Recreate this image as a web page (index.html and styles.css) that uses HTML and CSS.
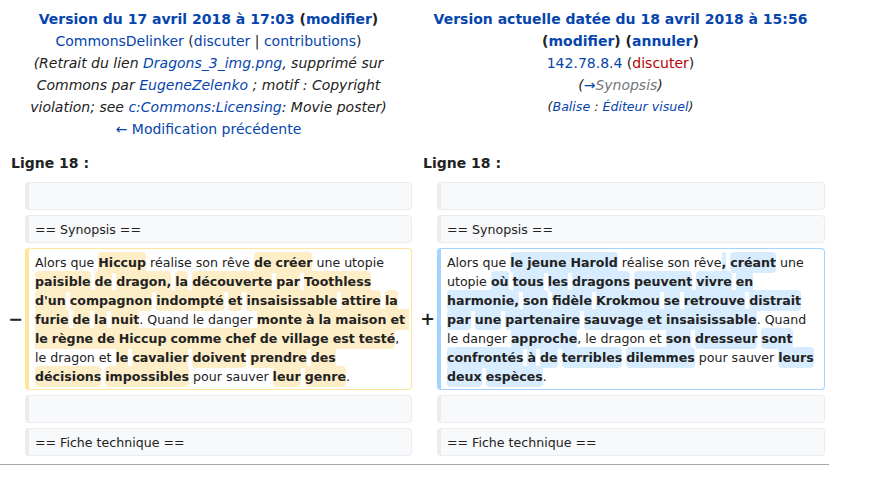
FILE: index.html
```html
<!DOCTYPE html>
<html lang="fr">
<head>
<meta charset="utf-8">
<title>Différences entre les versions</title>
<link rel="stylesheet" href="styles.css">
</head>
<body>
<div class="page">
  <div class="diff">
    <div class="title">
      <div class="t-head"><a href="#">Version du 17 avril 2018 à 17:03</a> (<a href="#">modifier</a>)</div>
      <div><a href="#">CommonsDelinker</a> (<a href="#">discuter</a> | <a href="#">contributions</a>)</div>
      <div class="comment">(Retrait du lien <a href="#">Dragons_3_img.png</a>, supprimé sur Commons par <a href="#">EugeneZelenko</a> ; motif : Copyright violation; see <a href="#">c:Commons:Licensing</a>: Movie poster)</div>
      <div><a href="#">← Modification précédente</a></div>
    </div>
    <div class="title">
      <div class="t-head"><a href="#">Version actuelle datée du 18 avril 2018 à 15:56</a> (<a href="#">modifier</a>) (<a href="#">annuler</a>)</div>
      <div><a href="#">142.78.8.4</a> (<a href="#" class="new">discuter</a>)</div>
      <div class="comment">(<a href="#">→</a><span class="autocomment">Synopsis</span>)</div>
      <div class="comment tags">(<a href="#">Balise</a> : <a href="#">Éditeur visuel</a>)</div>
    </div>

    <div class="lineno">Ligne 18 :</div>
    <div class="lineno lineno-r">Ligne 18 :</div>

    <div class="line context c-left">&nbsp;</div>
    <div class="line context c-right">&nbsp;</div>

    <div class="line context c-left">== Synopsis ==</div>
    <div class="line context c-right">== Synopsis ==</div>

    <div class="marker">−</div>
    <div class="line deleted">Alors que <span class="chg">Hiccup</span> réalise son rêve <span class="chg">de créer</span> une utopie <span class="chg">paisible</span> <span class="chg">de</span> <span class="chg">dragon,</span> <span class="chg">la</span> <span class="chg">découverte</span> <span class="chg">par</span> <span class="chg">Toothless</span> <span class="chg">d'un</span> <span class="chg">compagnon</span> <span class="chg">indompté</span> <span class="chg">et</span> <span class="chg">insaisissable</span> <span class="chg">attire</span> <span class="chg">la</span> <span class="chg">furie</span> <span class="chg">de</span> <span class="chg">la</span> <span class="chg">nuit</span>. Quand le danger <span class="chg">monte à la maison et le règne de Hiccup comme chef de village est testé</span>, le dragon et <span class="chg">le</span> <span class="chg">cavalier</span> <span class="chg">doivent</span> <span class="chg">prendre</span> <span class="chg">des</span> <span class="chg">décisions</span> <span class="chg">impossibles</span> pour sauver <span class="chg">leur</span> <span class="chg">genre</span>.</div>
    <div class="marker">+</div>
    <div class="line added">Alors que <span class="chg">le jeune Harold</span> réalise son rêve<span class="chg">,</span> <span class="chg">créant</span> une utopie <span class="chg">où</span> <span class="chg">tous</span> <span class="chg">les</span> <span class="chg">dragons</span> <span class="chg">peuvent</span> <span class="chg">vivre</span> <span class="chg">en</span> <span class="chg">harmonie,</span> <span class="chg">son</span> <span class="chg">fidèle</span> <span class="chg">Krokmou</span> <span class="chg">se</span> <span class="chg">retrouve</span> <span class="chg">distrait</span> <span class="chg">par</span> <span class="chg">une</span> <span class="chg">partenaire</span> <span class="chg">sauvage et insaisissable</span>. Quand le danger <span class="chg">approche</span>, le dragon et <span class="chg">son</span> <span class="chg">dresseur</span> <span class="chg">sont</span> <span class="chg">confrontés</span> <span class="chg">à</span> <span class="chg">de</span> <span class="chg">terribles</span> <span class="chg">dilemmes</span> pour sauver <span class="chg">leurs</span> <span class="chg">deux</span> <span class="chg">espèces</span>.</div>

    <div class="line context c-left">&nbsp;</div>
    <div class="line context c-right">&nbsp;</div>

    <div class="line context c-left">== Fiche technique ==</div>
    <div class="line context c-right">== Fiche technique ==</div>
  </div>
  <div class="rule"></div>
</div>
</body>
</html>
```

FILE: styles.css
```css
html, body {
  margin: 0;
  padding: 0;
  background: #fff;
}

body {
  font-family: "DejaVu Sans", sans-serif;
  font-size: 14px;
  color: #222;
}

a {
  color: #0645ad;
  text-decoration: none;
}

a.new {
  color: #ba0000;
}

.page {
  width: 829px;
}

.diff {
  display: grid;
  grid-template-columns: 16px 387px 17px 388px;
  column-gap: 4px;
  row-gap: 5px;
  padding: 8px 4px 0 5px;
}

.title {
  grid-column: span 2;
  text-align: center;
  line-height: 22px;
}

.t-head {
  font-weight: bold;
}

.comment {
  font-style: italic;
}

.tags {
  font-size: 12.6px;
}

.autocomment {
  color: #72777d;
}

.lineno {
  grid-column: span 2;
  font-weight: bold;
  line-height: 22px;
  padding-left: 6px;
  margin-top: 7px;
  margin-bottom: 3px;
}

.lineno-r {
  padding-left: 7px;
}

.marker {
  text-align: right;
  font-weight: bold;
  font-size: 17.5px;
  line-height: 1.2;
  align-self: center;
  margin-right: -2px;
}

.line {
  font-size: 12.6px;
  line-height: 19px;
  padding: 3.5px 5.5px 3.5px 6px;
  border: 1px solid;
  border-left-width: 4px;
  border-radius: 4px;
  white-space: pre-wrap;
  overflow-wrap: break-word;
  min-width: 0;
}

.context {
  background: #f8f9fa;
  border-color: #eaecf0;
}

.c-left {
  grid-column: 2;
}

.c-right {
  grid-column: 4;
}

.deleted {
  border-color: #ffe49c;
}

.added {
  border-color: #a3d3ff;
}

.chg {
  font-weight: bold;
  word-spacing: -0.03em;
  border-radius: 4px;
  padding: 3px 0;
}

.deleted .chg {
  background: #feeec8;
}

.added .chg {
  background: #d8ecff;
}

.rule {
  border-top: 1px solid #a2a9b1;
  margin-top: 8px;
}
```
